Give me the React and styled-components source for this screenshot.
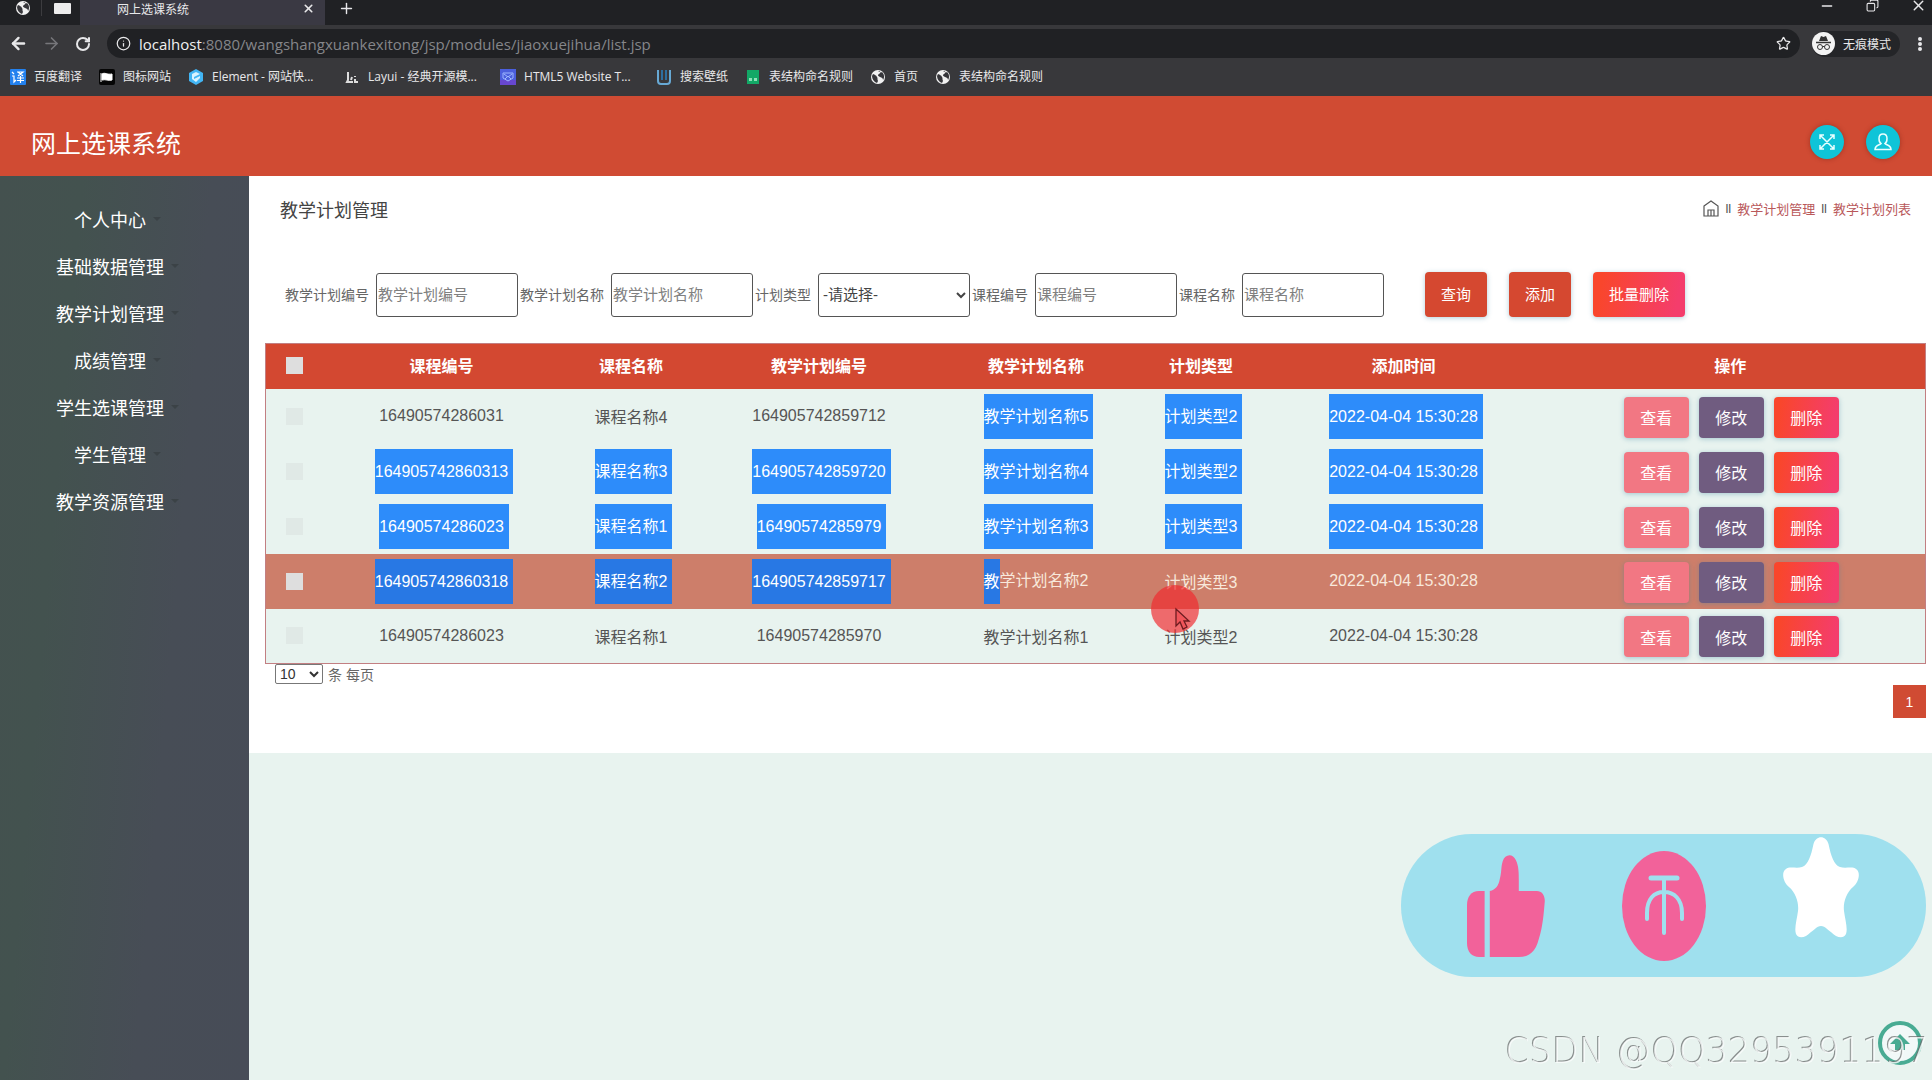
import React from 'react';
import styled, { createGlobalStyle, css } from 'styled-components';
import { ArrowLeft, ArrowRight, RotateCw, Info, Star, X, Plus, Minus, Copy } from 'lucide-react';

const MAIN_THEME_COLOR = '#d04b33';
const DELETE_GRADIENT = 'linear-gradient(100deg, #f9462c 10%, #f43d6c 90%)';
const PAGE_FONT = "'Liberation Sans', 'Noto Sans CJK SC', sans-serif";
const CHROME_FONT = "'Open Sans', 'Noto Sans CJK SC', sans-serif";

const bookmarks = [
  { icon: 'translate', name: '百度翻译' },
  { icon: 'flag', name: '图标网站' },
  { icon: 'element', name: 'Element - 网站快...', cut: true },
  { icon: 'layui', name: 'Layui - 经典开源模...', cut: true },
  { icon: 'html', name: 'HTML5 Website T...', cut: true },
  { icon: 'wallpaper', name: '搜索壁纸' },
  { icon: 'sheet', name: '表结构命名规则' },
  { icon: 'globe', name: '首页' },
  { icon: 'globe', name: '表结构命名规则' },
];

const menu = [
  '个人中心',
  '基础数据管理',
  '教学计划管理',
  '成绩管理',
  '学生选课管理',
  '学生管理',
  '教学资源管理',
];

const fields = [
  { id: 'planNo', label: '教学计划编号' },
  { id: 'planName', label: '教学计划名称' },
  { id: 'planType', label: '计划类型', select: true },
  { id: 'courseNo', label: '课程编号' },
  { id: 'courseName', label: '课程名称' },
];

const columns = ['课程编号', '课程名称', '教学计划编号', '教学计划名称', '计划类型', '添加时间', '操作'];
const widths = [52, 250, 129, 247, 187, 143, 262];
const TIME = '2022-04-04 15:30:28';

// from / to: first and last cell of the row covered by the text selection
const rows = [
  { cells: ['16490574286031', '课程名称4', '164905742859712', '教学计划名称5', '计划类型2', TIME], from: 3, to: 5 },
  { cells: ['164905742860313', '课程名称3', '164905742859720', '教学计划名称4', '计划类型2', TIME], from: 0, to: 5 },
  { cells: ['16490574286023', '课程名称1', '16490574285979', '教学计划名称3', '计划类型3', TIME], from: 0, to: 5 },
  { cells: ['164905742860318', '课程名称2', '164905742859717', '教学计划名称2', '计划类型3', TIME], from: 0, to: 2, hover: true },
  { cells: ['16490574286023', '课程名称1', '16490574285970', '教学计划名称1', '计划类型2', TIME] },
];

const GlobalStyle = createGlobalStyle`
  * {
    box-sizing: border-box;
  }
  body {
    margin: 0;
    background: #e8f3ef;
    font-family: ${PAGE_FONT};
    color: #555;
  }
  button,
  input,
  select {
    font-family: inherit;
  }
  a {
    color: inherit;
    text-decoration: none;
  }
`;

const Page = styled.div`
  display: flex;
  flex-direction: column;
  min-height: 100vh;
`;

const Browser = styled.div`
  background: #38383b;
  color: #e8e8ea;
  font-family: ${CHROME_FONT};
  font-size: 12px;
  height: 96px;
  svg {
    flex: none;
  }
`;

const TabBar = styled.div`
  display: flex;
  height: 25px;
  background: #202124;
`;

const PinnedTab = styled.div`
  display: flex;
  justify-content: center;
  width: ${(props) => props.$width}px;
  height: 16px;
  align-items: center;
  border-right: 1px solid ${(props) => (props.$last ? 'transparent' : '#3c3c3f')};
  padding-left: 4px;
`;

const ActiveTab = styled.div`
  display: flex;
  align-items: center;
  justify-content: space-between;
  width: 245px;
  padding: 0 10px 8px 37px;
  background: #3a3943;
`;

const ChromeButton = styled.button`
  display: flex;
  align-items: center;
  justify-content: center;
  border: 0;
  padding: 0;
  background: none;
  color: ${(props) => (props.$dim ? '#77777b' : '#e8e8ea')};
`;

const NewTab = styled(ChromeButton)`
  width: 42px;
  height: 16px;
`;

const WindowControls = styled.div`
  display: flex;
  gap: 31px;
  margin-left: auto;
  padding-right: 5px;
  height: 11px;
`;

const Toolbar = styled.div`
  display: flex;
  align-items: center;
  height: 37px;
  padding: 0 6px 0 9px;
`;

const NavButtons = styled.div`
  display: flex;
  gap: 14px;
  margin-right: 16px;
`;

const AddressBar = styled.div`
  display: flex;
  align-items: center;
  flex: 1;
  height: 29px;
  border-radius: 15px;
  background: #202124;
  padding: 0 9px;
`;

const AddressInput = styled.div`
  flex: 1;
  margin-left: 8px;
  font-size: 15px;
  line-height: 20px;
  color: #85868a;
`;

const Host = styled.span`
  color: #f0f0f0;
`;

const Incognito = styled.div`
  display: flex;
  align-items: center;
  gap: 8px;
  height: 26px;
  margin: 0 14px 0 12px;
  padding-right: 9px;
  border-radius: 13px;
  background: #242528;
`;

const Bookmarks = styled.nav`
  display: flex;
  align-items: center;
  gap: 1px;
  height: 30px;
  padding-left: 2px;
`;

const Bookmark = styled.a`
  display: flex;
  align-items: center;
  gap: 8px;
  padding: 0 8px;
  line-height: 18px;
  white-space: nowrap;
  ${(props) => props.$cut && 'width: 155px;'}
`;

const Header = styled.header`
  display: flex;
  align-items: center;
  justify-content: space-between;
  height: 80px;
  padding: 12px 32px 0 31px;
  background: ${MAIN_THEME_COLOR};
`;

const Brand = styled.h1`
  margin: 0;
  color: #fff;
  font-size: 25px;
  font-weight: 400;
`;

const RoundButtons = styled.div`
  display: flex;
  gap: 22px;
`;

const RoundButton = styled.button`
  display: flex;
  align-items: center;
  justify-content: center;
  width: 34px;
  height: 34px;
  border: 0;
  border-radius: 50%;
  padding: 0;
  background: #0fc4d8;
  box-shadow: 0 0 5px rgba(90, 20, 10, 0.4);
`;

const Body = styled.div`
  display: flex;
  flex: 1;
`;

const Sidebar = styled.nav`
  width: 249px;
  padding-top: 19px;
  background: linear-gradient(95deg, #44514f 0%, #43524f 25%, #474d56 65%, #474c57 100%);
`;

const Menu = styled.ul`
  width: 220px;
  margin: 0;
  padding: 0;
  list-style: none;
`;

const MenuLink = styled.a`
  display: flex;
  align-items: center;
  justify-content: center;
  height: 47px;
  color: #fff;
  font-size: 18px;
  &::after {
    content: '';
    margin: 0 -15px 0 7px;
    border: 4px solid transparent;
    border-top-color: #3b4246;
    border-bottom: 0;
  }
`;

const Main = styled.main`
  flex: 1;
`;

const Panel = styled.section`
  background: #fff;
  padding: 0 6px 35px 16px;
`;

const TitleRow = styled.div`
  display: flex;
  align-items: center;
  justify-content: space-between;
  height: 66px;
  padding: 0 15px;
`;

const Title = styled.h2`
  margin: 0;
  font-size: 18px;
  font-weight: 400;
  color: #444;
`;

const Breadcrumb = styled.div`
  display: flex;
  align-items: center;
  gap: 6px;
  padding-bottom: 2px;
  font-size: 13px;
  color: #555;
  a {
    color: #b9585a;
  }
`;

const Search = styled.form`
  display: flex;
  align-items: center;
  gap: 2px;
  margin: 30px 0 26px 20px;
`;

const Field = styled.div`
  display: flex;
  align-items: center;
  gap: 7px;
  label {
    font-size: 14px;
    color: #666;
    white-space: nowrap;
    padding-bottom: 2px;
  }
`;

const control = css`
  height: 44px;
  border: 1px solid #555;
  border-radius: 3px;
  background: #fff;
  font-size: 15px;
`;

const TextInput = styled.input`
  ${control}
  width: 142px;
  padding: 0 0 0 1px;
  &::placeholder {
    color: #808080;
  }
`;

const SelectInput = styled.select`
  ${control}
  width: 152px;
  color: #444;
`;

const SearchButtons = styled.div`
  display: flex;
  gap: 22px;
  margin-left: 39px;
`;

const Button = styled.button`
  height: 45px;
  padding: 0 16px 2px;
  border: 0;
  border-radius: 4px;
  color: #fff;
  font-size: 15px;
  white-space: nowrap;
  background: ${(props) => props.$background || '#d54830'};
  box-shadow: 0 1px 5px rgba(60, 130, 160, 0.4);
`;

const ActionButton = styled(Button)`
  width: 65px;
  height: 41px;
  padding: 0;
  font-size: 16px;
`;

const Actions = styled.div`
  display: flex;
  justify-content: center;
  gap: 10px;
  padding: 2px 0 0 2px;
`;

const Table = styled.table`
  width: 100%;
  table-layout: fixed;
  border-collapse: collapse;
  border: 1px solid #c27f82;
  background: #e8f3ef;
  font-size: 16px;
  text-align: center;
  th,
  td {
    padding: 0;
  }
  th:not(:last-child),
  td:not(:last-child) {
    padding-right: 2px;
  }
  th {
    height: 45px;
    padding-bottom: 2px;
    color: #fff;
    background: #d34831;
  }
`;

const Row = styled.tr`
  height: 55px;
  color: ${(props) => (props.$hover ? '#f8e9dc' : '#555')};
  background: ${(props) => (props.$hover ? '#cd7e6a' : '#e8f3ef')};
`;

const Check = styled.input`
  appearance: none;
  display: block;
  width: 17px;
  height: 17px;
  margin: 0 0 0 20px;
  background: ${(props) => (props.$strong ? '#dedede' : '#e0e9e6')};
`;

const Selected = styled.span`
  display: inline-block;
  line-height: 45px;
  vertical-align: middle;
  color: #fff;
  background: ${(props) => (props.$dark ? '#2878e4' : '#2d8cfa')};
  padding-right: ${(props) => (props.$part ? 0 : 5)}px;
  margin-right: ${(props) => (props.$part ? 0 : -5)}px;
`;

const PageSize = styled.div`
  display: flex;
  align-items: center;
  gap: 5px;
  height: 20px;
  padding-left: 10px;
  font-size: 14px;
  color: #666;
  select {
    width: 48px;
    height: 20px;
    border: 1px solid #777;
    border-radius: 2px;
    background: #fff;
    color: #333;
    font-size: 14px;
    padding: 0;
  }
`;

const Pager = styled.div`
  display: flex;
  justify-content: flex-end;
  margin-top: 1px;
`;

const PageButton = styled.button`
  width: 33px;
  height: 33px;
  border: 0;
  background: ${MAIN_THEME_COLOR};
  color: #fff;
  font-size: 14px;
`;

const Pointer = styled.svg`
  position: fixed;
  left: 1151px;
  top: 585px;
  pointer-events: none;
`;

const Reactions = styled.div`
  position: fixed;
  right: 6px;
  bottom: 103px;
  display: flex;
  align-items: center;
  gap: 77px;
  width: 525px;
  height: 143px;
  padding-left: 66px;
  border-radius: 71px;
  background: #9fe0ee;
`;

const Reaction = styled.button`
  display: flex;
  border: 0;
  padding: 0;
  background: none;
  ${(props) => props.$top && 'align-self: flex-start; margin-top: 3px;'}
`;

const BackToTop = styled.button`
  position: fixed;
  right: 10px;
  bottom: 14px;
  width: 44px;
  height: 46px;
  border: 0;
  padding: 0;
  background: none;
`;

const Watermark = styled.div`
  position: fixed;
  right: 3px;
  bottom: 9px;
  font: 200 35px/40px 'DejaVu Sans', sans-serif;
  color: rgba(250, 252, 252, 0.8);
  text-shadow: -1px -1px 0 rgba(105, 110, 110, 0.75);
  white-space: nowrap;
`;

const GlobeIcon = () => (
  <svg width="16" height="16" viewBox="0 0 16 16">
    <circle cx="8" cy="8" r="7" fill="#f1f1f1" />
    <path
      d="M3 5c2 1 3 1 4 3 1 1 0 2 1 4l-1 2C4 13 2 10 2 7zM8 2c3 0 3 2 1 3S8 7 10 8s3 1 3 3c2-3 1-6-1-8-1 1-2 0-4-1z"
      fill="#36363a"
    />
  </svg>
);

const icons = {
  globe: <GlobeIcon />,
  translate: (
    <svg width="16" height="16" viewBox="0 0 16 16">
      <rect width="16" height="16" rx="1" fill="#2381ee" />
      <path
        d="M2 3l2 2M2 7h2v6l2-2M7 3h6l-5 4M8 3l5 4M7 9h7M10.500 7v7M7 11.500h7"
        fill="none"
        stroke="#fff"
        strokeWidth="1.200"
      />
    </svg>
  ),
  flag: (
    <svg width="16" height="16" viewBox="0 0 16 16">
      <rect width="16" height="16" rx="2" fill="#050505" />
      <path d="M2 4v9M3 5c3-2 5 1 10 0v6c-4 1-6-1-10 0z" fill="#fff" stroke="#fff" />
    </svg>
  ),
  element: (
    <svg width="16" height="16" viewBox="0 0 16 16">
      <path d="M8 0l7 4v8l-7 4-7-4V4z" fill="#42b5f4" />
      <path d="M4 5l4-2 4 2-6 3v2l6-3v2l-4 4-4-3z" fill="#d9f3ff" />
    </svg>
  ),
  layui: (
    <svg width="16" height="16" viewBox="0 0 16 16">
      <path d="M4 3v8l-1 2h6M8 8l-1 3M11 7v1M11 10v3h3" fill="none" stroke="#ddd" strokeWidth="2" />
    </svg>
  ),
  html: (
    <svg width="16" height="16" viewBox="0 0 16 16">
      <rect width="16" height="16" fill="#4b5fdd" />
      <path d="M0 11h16v5H0z" fill="#6747cf" />
      <path d="M3 4h10v5l-5 3-5-3zM4 5l4 3 4-3M5 10l3-3 3 3" fill="none" stroke="#9db7ff" />
    </svg>
  ),
  wallpaper: (
    <svg width="16" height="16" viewBox="0 0 16 16">
      <path d="M2 1v11q0 3 3 3h6q3 0 3-3V1" fill="none" stroke="#67a9d5" strokeWidth="2" />
      <path d="M6 1v10M10 1v10" stroke="#2e6fa0" strokeWidth="2" />
    </svg>
  ),
  sheet: (
    <svg width="16" height="16" viewBox="0 0 16 16">
      <path d="M2 1h12v14H2z" fill="#12a866" />
      <path d="M4 9h3v3H4zM9 9h3v3H9z" fill="#8fe0b9" />
    </svg>
  ),
};

const Chrome = () => (
  <Browser>
    <TabBar>
      <PinnedTab $width={42}>
        <GlobeIcon />
      </PinnedTab>
      <PinnedTab $width={38} $last>
        <svg width="17" height="11">
          <rect width="17" height="11" rx="1" fill="#ededed" />
        </svg>
      </PinnedTab>
      <ActiveTab>
        网上选课系统
        <ChromeButton aria-label="关闭标签页">
          <X size={13} strokeWidth={3} />
        </ChromeButton>
      </ActiveTab>
      <NewTab aria-label="新标签页">
        <Plus size={17} />
      </NewTab>
      <WindowControls>
        <ChromeButton aria-label="最小化">
          <Minus size={16} strokeWidth={2} />
        </ChromeButton>
        <ChromeButton aria-label="还原">
          <Copy size={13} transform="scale(-1 1)" />
        </ChromeButton>
        <ChromeButton aria-label="关闭">
          <X size={17} />
        </ChromeButton>
      </WindowControls>
    </TabBar>
    <Toolbar>
      <NavButtons>
        <ChromeButton aria-label="后退">
          <ArrowLeft size={19} strokeWidth={3} />
        </ChromeButton>
        <ChromeButton aria-label="前进" $dim>
          <ArrowRight size={19} strokeWidth={2} />
        </ChromeButton>
        <ChromeButton aria-label="刷新">
          <RotateCw size={16} strokeWidth={3} />
        </ChromeButton>
      </NavButtons>
      <AddressBar>
        <Info size={15} />
        <AddressInput>
          <Host>localhost</Host>:8080/wangshangxuankexitong/jsp/modules/jiaoxuejihua/list.jsp
        </AddressInput>
        <Star size={15} />
      </AddressBar>
      <Incognito>
        <svg width="23" height="23" viewBox="0 0 23 23">
          <circle cx="11.500" cy="11.500" r="11.500" fill="#f3f3f3" />
          <path d="M7 9l2-5 2.500 1L14 4l2 5z" fill="#333" />
          <path d="M4 10.500h15" stroke="#333" strokeWidth="1.500" />
          <circle cx="8" cy="15" r="2.500" fill="none" stroke="#333" />
          <circle cx="15" cy="15" r="2.500" fill="none" stroke="#333" />
          <path d="M10.500 14.500h2" stroke="#333" />
        </svg>
        无痕模式
      </Incognito>
      <ChromeButton aria-label="菜单">
        <svg width="12" height="16" fill="#e8e8ea">
          <circle cx="6" cy="3" r="2" />
          <circle cx="6" cy="8" r="2" />
          <circle cx="6" cy="13" r="2" />
        </svg>
      </ChromeButton>
    </Toolbar>
    <Bookmarks>
      {bookmarks.map((item, index) => (
        <Bookmark href="#" key={index} $cut={item.cut}>
          {icons[item.icon]}
          {item.name}
        </Bookmark>
      ))}
    </Bookmarks>
  </Browser>
);

const SearchForm = () => (
  <Search onSubmit={(e) => e.preventDefault()}>
    {fields.map((field) => (
      <Field key={field.id}>
        <label htmlFor={field.id}>{field.label}</label>
        {field.select ? (
          <SelectInput id={field.id}>
            <option>-请选择-</option>
          </SelectInput>
        ) : (
          <TextInput id={field.id} placeholder={field.label} />
        )}
      </Field>
    ))}
    <SearchButtons>
      <Button type="submit">查询</Button>
      <Button type="button">添加</Button>
      <Button type="button" $background={DELETE_GRADIENT}>
        批量删除
      </Button>
    </SearchButtons>
  </Search>
);

const CellText = ({ row, index, text }) => {
  if (index >= row.from && index <= row.to) {
    return <Selected $dark={row.hover}>{text}</Selected>;
  }
  // the selection ends after the first character of this cell
  if (row.hover && index === 3) {
    return (
      <>
        <Selected $dark $part>
          {text[0]}
        </Selected>
        {text.slice(1)}
      </>
    );
  }
  return text;
};

const PlanTable = () => (
  <Table>
    <colgroup>
      {widths.map((width, index) => (
        <col key={index} width={width} />
      ))}
      <col />
    </colgroup>
    <thead>
      <tr>
        <th>
          <Check type="checkbox" aria-label="全选" $strong />
        </th>
        {columns.map((name) => (
          <th key={name}>{name}</th>
        ))}
      </tr>
    </thead>
    <tbody>
      {rows.map((row, i) => (
        <Row key={i} $hover={row.hover}>
          <td>
            <Check type="checkbox" aria-label={row.cells[3]} $strong={row.hover} />
          </td>
          {row.cells.map((text, index) => (
            <td key={index}>
              <CellText row={row} index={index} text={text} />
            </td>
          ))}
          <td>
            <Actions>
              <ActionButton $background="#f27783">查看</ActionButton>
              <ActionButton $background="#705c80">修改</ActionButton>
              <ActionButton $background={DELETE_GRADIENT}>删除</ActionButton>
            </Actions>
          </td>
        </Row>
      ))}
    </tbody>
  </Table>
);

const Overlays = () => (
  <>
    <Pointer width="48" height="48" viewBox="0 0 48 48">
      <circle cx="24" cy="24" r="24" fill="#f02a2e" fillOpacity="0.680" />
      <path d="M25 24v17l4-4 3 7 4-2-3-6h5z" fill="#f0555a" stroke="#6d1c20" strokeWidth="1.300" />
    </Pointer>
    <Reactions>
      <Reaction aria-label="点赞">
        <svg width="78" height="102" viewBox="0 0 78 102" fill="#f2629a">
          <path d="M17.600 36H12C4 36 0 42 0 50v38c0 9 5 14 12 14h5.600z" />
          <path d="M22.800 36c6-1 9-6 10-12 2-7 1-12 3-18 2-7 10-8 13-1 3 6 3 13 3 20v11h18c5 0 8 4 8 10-1 12-2 26-6 38-3 12-9 18-20 18h-29z" />
        </svg>
      </Reaction>
      <Reaction aria-label="投币">
        <svg width="84" height="110" viewBox="0 0 84 110">
          <ellipse cx="42" cy="55" rx="42" ry="55" fill="#f2629a" />
          <g fill="none" stroke="#9fe0ee" strokeWidth="4" strokeLinecap="round">
            <path d="M29 27h26" strokeWidth="5" />
            <path d="M42 28v54M25 68v-6C25 48 32 41 42 41s18 7 18 21v6" />
          </g>
        </svg>
      </Reaction>
      <Reaction aria-label="收藏" $top>
        <svg width="76" height="101" viewBox="0 0 76 101">
          <path
            d="M30.500 7C33-2 43-2 45.500 7C48 19 51 28 57 30C62 32 70 29 73 32C78 35 76 45 70 50C63 56 60 66 61 74C62 82 65 92 63 97C61 101 57 101 53 99C46 94 42 89 38 89C34 89 30 94 23 99C19 101 15 101 13 97C11 92 14 82 15 74C16 66 13 56 6 50C0 45-2 35 3 32C6 29 14 32 19 30C25 28 28 19 30.500 7Z"
            fill="#fff"
          />
        </svg>
      </Reaction>
    </Reactions>
    <BackToTop aria-label="返回顶部">
      <svg width="44" height="46" viewBox="0 0 44 46">
        <circle cx="22" cy="23" r="20" fill="#f1f8f8" stroke="#48ab93" strokeWidth="4" />
        <path d="M22 14l10 10H12zM17 24h10v6H17z" fill="#48ab93" />
      </svg>
    </BackToTop>
    <Watermark>CSDN @QQ3295391197</Watermark>
  </>
);

const App = () => (
  <Page>
    <GlobalStyle />
    <Chrome />
    <Header>
      <Brand>网上选课系统</Brand>
      <RoundButtons>
        <RoundButton aria-label="全屏">
          <svg width="18" height="18" viewBox="0 0 18 18" fill="none" stroke="#e9ffff" strokeWidth="1.500">
            <path d="M2 2l14 14M16 2L2 16M2 6V2h4M12 2h4v4M16 12v4h-4M6 16H2v-4" />
          </svg>
        </RoundButton>
        <RoundButton aria-label="用户">
          <svg width="20" height="18" viewBox="0 0 20 18" fill="none" stroke="#e9ffff" strokeWidth="1.500">
            <path d="M10 1C7 1 6 3 6 5.500S7 10 8 10.500C7 12 2 12 2 16.500h16c0-4.500-5-4.500-6-6 1-.5 2-2.500 2-5S13 1 10 1z" />
          </svg>
        </RoundButton>
      </RoundButtons>
    </Header>
    <Body>
      <Sidebar>
        <Menu>
          {menu.map((name) => (
            <li key={name}>
              <MenuLink href="#">{name}</MenuLink>
            </li>
          ))}
        </Menu>
      </Sidebar>
      <Main>
        <Panel>
          <TitleRow>
            <Title>教学计划管理</Title>
            <Breadcrumb>
              <svg width="16" height="17" viewBox="0 0 16 17" fill="none" stroke="#555" strokeWidth="1.200">
                <path d="M1 6l7-5 7 5v10H1zM5 16v-6h6v6M8 10v6" />
              </svg>
              <span>ll</span>
              <a href="#">教学计划管理</a>
              <span>ll</span>
              <a href="#">教学计划列表</a>
            </Breadcrumb>
          </TitleRow>
          <SearchForm />
          <PlanTable />
          <PageSize>
            <select aria-label="每页条数">
              <option>10</option>
            </select>
            <span>条 每页</span>
          </PageSize>
          <Pager>
            <PageButton>1</PageButton>
          </Pager>
        </Panel>
      </Main>
    </Body>
    <Overlays />
  </Page>
);

export default App;
